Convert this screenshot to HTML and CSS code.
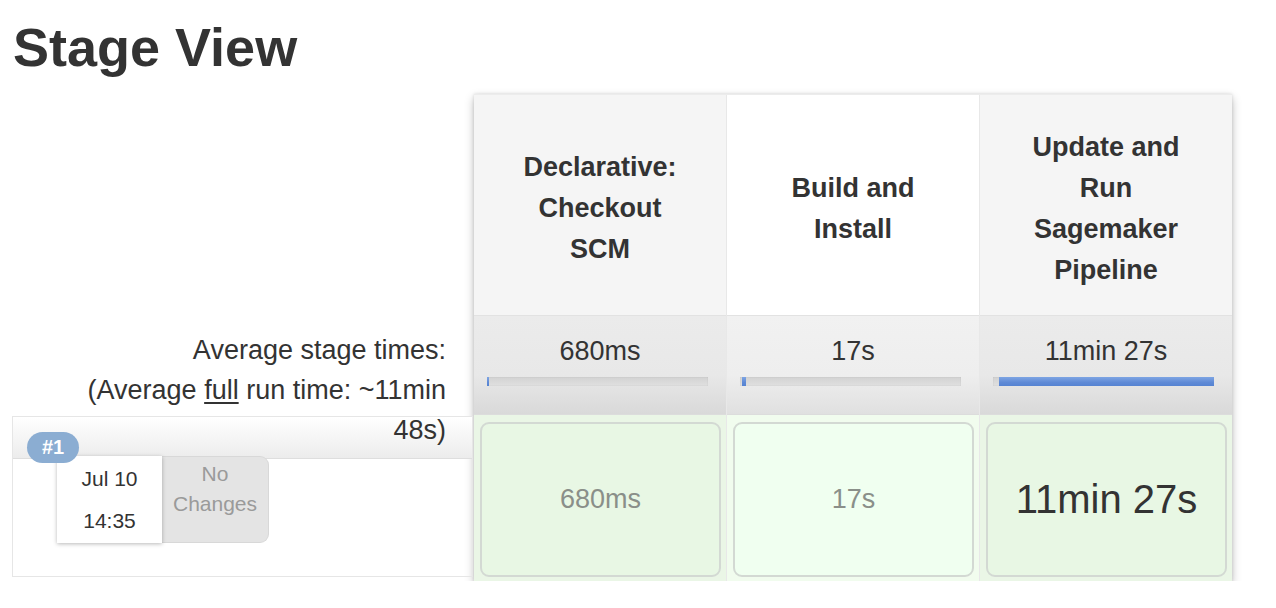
FILE: index.html
```html
<!DOCTYPE html>
<html lang="en">
<head>
<meta charset="utf-8">
<title>Stage View</title>
<link rel="stylesheet" href="styles.css">
</head>
<body>
<h1 class="title">Stage View</h1>
<div class="stage-view">
  <div class="side">
    <div class="side-head"></div>
    <div class="avg-label">Average stage times:<br>(Average <u>full</u> run time: ~11min 48s)</div>
    <div class="build">
      <div class="build-band"></div>
      <span class="badge">#1</span>
      <div class="build-info">
        <div class="date">Jul 10<br>14:35</div>
        <div class="changes">No Changes</div>
      </div>
    </div>
  </div>
  <div class="table">
    <div class="col odd">
      <div class="head"><span>Declarative: Checkout SCM</span></div>
      <div class="avg">
        <div class="avg-time">680ms</div>
        <div class="bar"><div class="fill" style="margin-left:0;width:2px"></div></div>
      </div>
      <div class="cell-wrap"><div class="cell">680ms</div></div>
    </div>
    <div class="col even">
      <div class="head"><span>Build and Install</span></div>
      <div class="avg">
        <div class="avg-time">17s</div>
        <div class="bar"><div class="fill" style="margin-left:2px;width:4px"></div></div>
      </div>
      <div class="cell-wrap"><div class="cell">17s</div></div>
    </div>
    <div class="col odd">
      <div class="head"><span>Update and Run Sagemaker Pipeline</span></div>
      <div class="avg">
        <div class="avg-time">11min 27s</div>
        <div class="bar"><div class="fill" style="margin-left:6px;width:215px"></div></div>
      </div>
      <div class="cell-wrap"><div class="cell cell-long">11min 27s</div></div>
    </div>
  </div>
</div>
</body>
</html>
```

FILE: styles.css
```css
* { box-sizing: border-box; }

body {
  margin: 0;
  background: #fff;
  color: #333;
  font-family: "Liberation Sans", Arial, Helvetica, sans-serif;
}

.title {
  margin: 17px 0 17px 13px;
  font-size: 54px;
  line-height: 60px;
  font-weight: bold;
  color: #333;
}

.stage-view {
  display: flex;
  margin-left: 12px;
  align-items: flex-start;
}

/* left side */
.side {
  width: 462px;
  display: flex;
  flex-direction: column;
}

.side-head { height: 220px; }

.avg-label {
  position: relative;
  z-index: 1;
  height: 100px;
  padding: 16px 28px 0 40px;
  text-align: right;
  font-size: 27px;
  line-height: 40px;
  color: #333;
}

.avg-label u { text-decoration-thickness: 2px; text-underline-offset: 3px; }

.build {
  position: relative;
  margin-top: 2px;
  width: 461px;
  height: 161px;
  border: 1px solid #e6e6e6;
}

.build-band {
  height: 42px;
  background: linear-gradient(#ffffff, #ececec);
  border-bottom: 1px solid #dedede;
}

.badge {
  position: absolute;
  left: 14px;
  top: 15px;
  z-index: 2;
  width: 52px;
  height: 31px;
  border-radius: 16px;
  background: #8badd2;
  color: #fff;
  font-weight: bold;
  font-size: 20px;
  line-height: 31px;
  text-align: center;
}

.build-info {
  display: flex;
  margin: -3px 0 0 44px;
}

.date {
  width: 105px;
  height: 87px;
  background: #fff;
  box-shadow: 0 1px 4px rgba(0, 0, 0, 0.28);
  text-align: center;
  font-size: 21px;
  line-height: 42px;
  padding-top: 2px;
  color: #333;
  position: relative;
  z-index: 1;
}

.changes {
  width: 107px;
  height: 87px;
  background: #e4e4e4;
  border: 1px solid #d8d8d8;
  border-left: none;
  border-radius: 0 9px 9px 0;
  text-align: center;
  font-size: 21px;
  line-height: 30px;
  padding-top: 2px;
  color: #9a9a9a;
}

/* stage table */
.table {
  display: flex;
  background: #fff;
  border-top: 1px solid #ececec;
  box-shadow: 0 4px 9px rgba(0, 0, 0, 0.26), 0 0 3px rgba(0, 0, 0, 0.12);
}

.col {
  width: 252px;
  display: flex;
  flex-direction: column;
}

.col + .col {
  width: 253px;
  border-left: 1px solid #e8e8e8;
}

.head {
  height: 220px;
  display: flex;
  align-items: center;
  justify-content: center;
  padding: 7px 40px 0;
  text-align: center;
  font-weight: bold;
  font-size: 27px;
  line-height: 41px;
  color: #333;
}

.odd .head { background: #f5f5f5; }
.even .head { background: #ffffff; }

.avg {
  height: 99px;
  padding: 15px 18px 0 13px;
  border-top: 1px solid #e2e2e2;
  text-align: center;
}

.odd .avg { background: linear-gradient(#ebebeb 0%, #e8e8e8 60%, #d9d9d9 100%); }
.even .avg { background: linear-gradient(#f1f1f1 0%, #eeeeee 60%, #e0e0e0 100%); }

.avg-time {
  font-size: 27px;
  line-height: 40px;
  height: 39px;
  color: #333;
  padding-left: 5px;
}

.bar {
  margin-top: 7px;
  height: 9px;
  background: linear-gradient(#d2d2d2, #e0e0e0);
  box-shadow: inset 0 0 1px rgba(0, 0, 0, 0.25);
  display: flex;
}

.fill {
  height: 9px;
  background: linear-gradient(#7ea5e3, #5f8ad6 60%, #5583d2);
}

.cell-wrap {
  height: 167px;
  padding: 7px 5px 4px 6px;
  border-top: 1px solid #dcdcdc;
}

.odd .cell-wrap { background: #eaf6e6; }
.even .cell-wrap { background: #f1fcee; }

.cell {
  height: 100%;
  border: 2px solid #d3d9d3;
  border-radius: 9px;
  display: flex;
  align-items: center;
  justify-content: center;
  font-size: 27px;
  color: #8a8f89;
}

.odd .cell { background: #e8f7e4; }
.even .cell { background: #f0fff0; }

.cell-long {
  font-size: 40px;
  color: #333;
}
```
